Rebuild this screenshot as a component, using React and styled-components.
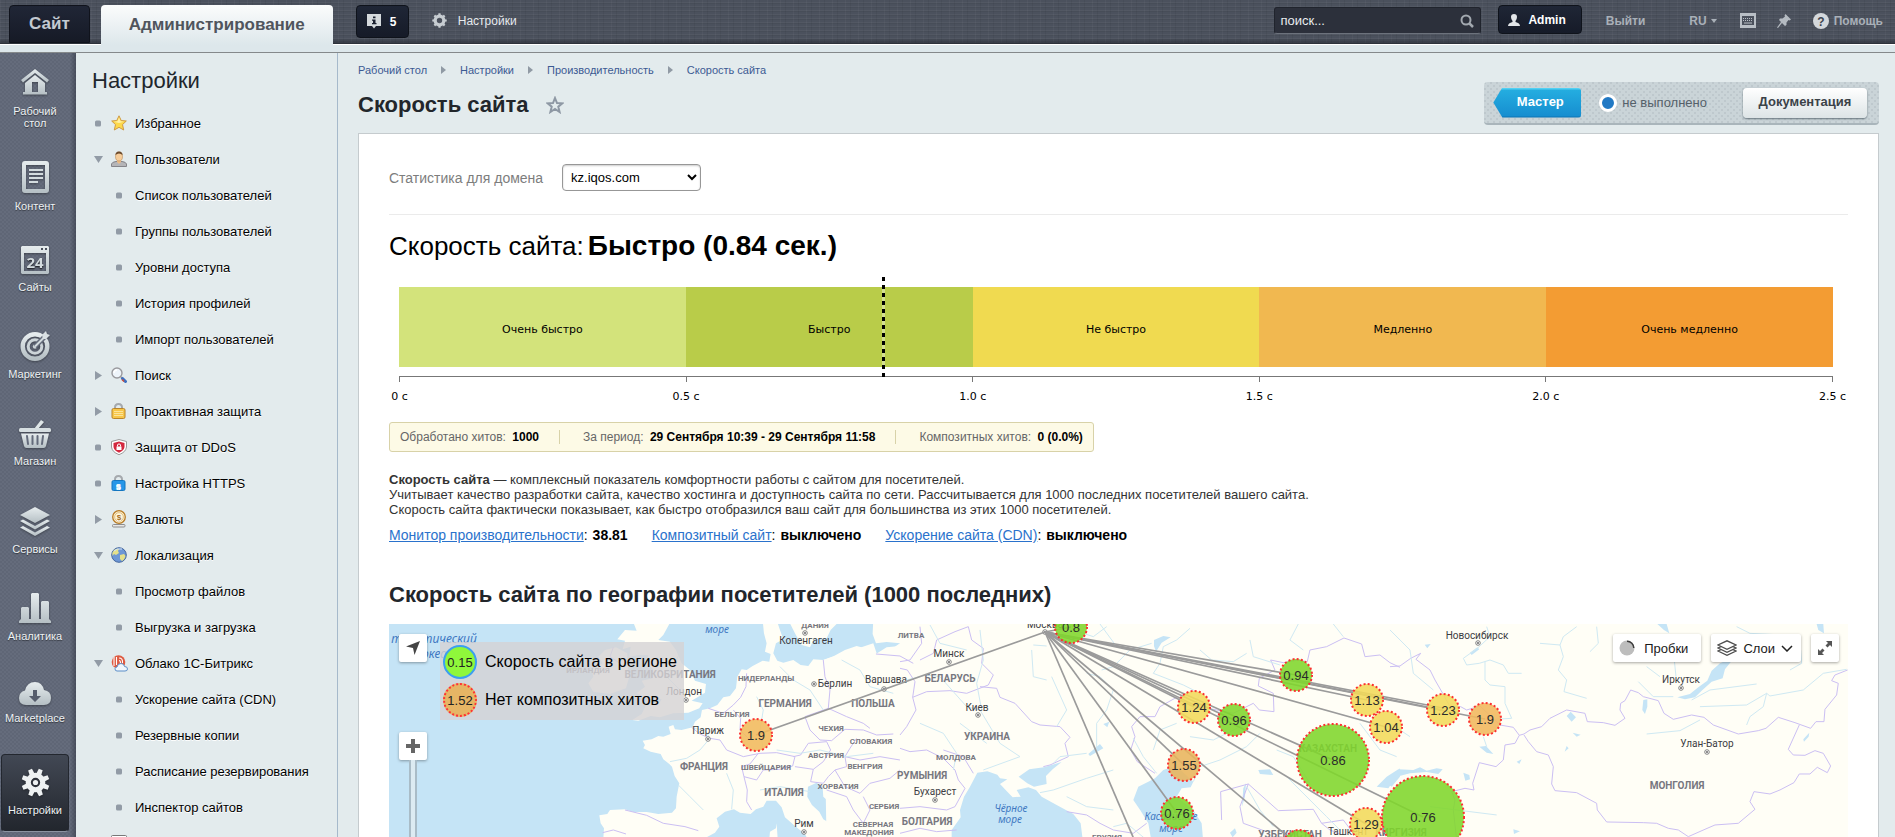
import styled, { createGlobalStyle, css } from 'styled-components';

const GlobalStyle = createGlobalStyle`
    *, *::before {
        box-sizing: border-box;
    }
    body {
        margin: 0;
        background: #e3ebed;
        font-family: "Liberation Sans", Arial, sans-serif;
        font-size: 13px;
        color: #000;
    }
    h1, h2, h3, p, ul, ol {
        margin: 0;
        padding: 0;
        font-weight: normal;
    }
    ul, ol {
        list-style: none;
    }
    a {
        color: inherit;
        text-decoration: none;
    }
    button, input, select {
        font-family: inherit;
    }
`;

const Page = styled.div`
    height: 100vh;
    display: flex;
    flex-direction: column;
    overflow: hidden;
`;

/* ---------- header ---------- */

const Header = styled.header`
    flex: none;
    background: #dde7eb;
    border-bottom: 1px solid #85898b;
    padding-bottom: 8px;
`;

const HeaderBar = styled.div`
    height: 44px;
    display: flex;
    align-items: flex-start;
    justify-content: space-between;
    background:
        linear-gradient(rgba(0,0,0,0) 90%, rgba(20,24,32,0.45)),
        repeating-linear-gradient(90deg, rgba(255,255,255,0.03) 0 1px, transparent 1px 5px, rgba(0,0,0,0.05) 5px 6px, transparent 6px 13px),
        repeating-linear-gradient(0deg, rgba(255,255,255,0.04) 0 1px, transparent 1px 3px, rgba(0,0,0,0.05) 3px 4px),
        #4b515d;
    border-bottom: 1px solid #2d323b;
    box-shadow: 0 1px 0 #fff;
`;

const HeaderSide = styled.div`
    display: flex;
    align-items: flex-start;
    height: 44px;
    padding: 5px 0 0 9px;
`;

const Tab = styled.a`
    height: ${(p) => (p.$active ? '40px' : '38px')};
    padding: ${(p) => (p.$active ? '0 28px' : '0 19px')};
    margin-right: 11px;
    display: flex;
    align-items: center;
    position: relative;
    font-size: 17px;
    font-weight: bold;
    border-radius: 4px 4px 0 0;
    color: ${(p) => (p.$active ? '#50555d' : '#c3cad1')};
    background: ${(p) => (p.$active ? 'linear-gradient(#fbfcfc, #dde7eb)' : 'linear-gradient(#202636, #161a26)')};
    border: ${(p) => (p.$active ? 'none' : '1px solid #10131c')};
`;

const darkButton = css`
    display: flex;
    align-items: center;
    border: 1px solid #0f131b;
    border-radius: 4px;
    background: linear-gradient(#1f2636, #161b28);
    color: #fff;
    font-size: 12px;
    font-weight: bold;
    cursor: pointer;
`;

const CounterButton = styled.button`
    ${darkButton}
    width: 53px;
    height: 33px;
    gap: 9px;
    padding: 0 10px;
    margin-left: 12px;
`;

const UserButton = styled.button`
    ${darkButton}
    height: 29px;
    padding: 0 15px 0 9px;
    gap: 8px;
    margin: 0 24px 0 17px;
`;

const BarLink = styled.a`
    display: flex;
    align-items: center;
    gap: ${(p) => p.$gap || 5}px;
    height: 31px;
    font-size: 12px;
    font-weight: ${(p) => (p.$light ? 'normal' : 'bold')};
    color: ${(p) => (p.$light ? '#e6eaee' : '#a9b0b8')};
    margin-left: ${(p) => p.$space || 0}px;
    &:last-child {
        margin-right: ${(p) => (p.$light ? 0 : 12)}px;
    }
`;

const SearchBox = styled.form`
    display: flex;
    align-items: center;
    width: 207px;
    height: 27px;
    margin-top: 2px;
    padding: 0 6px 0 5px;
    background: #2c303b;
    border: 1px solid #20242d;
    border-bottom-color: #6c727c;
    border-radius: 3px;
    input {
        flex: 1;
        min-width: 0;
        background: none;
        border: none;
        outline: none;
        padding: 0;
        font-size: 13px;
        color: #e8ecef;
    }
    input::placeholder {
        color: #e8ecef;
    }
    button {
        display: flex;
        background: none;
        border: none;
        padding: 0;
    }
`;

/* ---------- left columns ---------- */

const Body = styled.div`
    flex: 1;
    display: flex;
    min-height: 0;
`;

const Rail = styled.nav`
    flex: none;
    width: 76px;
    padding: 0 7px 0 1px;
    background:
        linear-gradient(90deg, transparent 92%, rgba(40,44,56,0.45)),
        radial-gradient(circle at 1px 1px, #5f6676 1px, transparent 1px) 0 0 / 4px 4px,
        radial-gradient(circle at 1px 1px, #5f6676 1px, transparent 1px) 2px 2px / 4px 4px,
        #656c7c;
`;

const RailItem = styled.a`
    display: flex;
    flex-direction: column;
    align-items: center;
    gap: 7px;
    margin-top: ${(p) => p.$space}px;
    padding: 13px 0 15px;
    border: 1px solid transparent;
    border-radius: 4px;
    font-size: 11px;
    line-height: 12px;
    text-align: center;
    color: #eef2f4;
    text-shadow: 0 1px 1px rgba(0,0,0,0.5);
    ${(p) => p.$active && css`
        background: linear-gradient(#424854, #22262d);
        border-color: #23272f;
        border-bottom-color: #8b93a0;
    `}
    svg {
        display: block;
        filter: drop-shadow(0 1px 1px rgba(0,0,0,0.35));
    }
`;

const Menu = styled.nav`
    flex: none;
    width: 262px;
    border-right: 1px solid #a6b9cb;
    padding: 13px 0 0 16px;
    overflow: hidden;
`;

const MenuTitle = styled.h2`
    font-size: 22px;
    line-height: 30px;
    color: #20262c;
    margin-bottom: 9px;
`;

const MenuRow = styled.a`
    display: flex;
    align-items: center;
    height: 36px;
    padding-left: ${(p) => (p.$child ? 21 : 0)}px;
    font-size: 13px;
    white-space: nowrap;
    text-shadow: 0 1px 0 #fff;
`;

const Marker = styled.span`
    width: ${(p) => (p.$child ? 22 : 19)}px;
    padding-left: 2px;
    flex: none;
    svg {
        display: block;
    }
`;

const MenuIcon = styled.span`
    width: 24px;
    flex: none;
    svg {
        display: block;
    }
`;

/* ---------- content ---------- */

const Main = styled.main`
    flex: 1;
    min-width: 0;
    padding: 10px 16px 0 20px;
`;

const Crumbs = styled.ol`
    display: flex;
    font-size: 11px;
    line-height: 14px;
    color: #3c5a93;
    li {
        display: flex;
        align-items: center;
    }
    li + li::before {
        content: '';
        margin: 0 14px;
        border: 4px solid transparent;
        border-left: 5px solid #909aa4;
        border-right: none;
    }
`;

const TitleRow = styled.div`
    display: flex;
    align-items: center;
    justify-content: space-between;
    margin: 5px 0 8px;
`;

const PageTitle = styled.h1`
    display: flex;
    align-items: center;
    gap: 17px;
    padding-top: 2px;
    font-size: 22px;
    font-weight: bold;
    color: #22262b;
`;

const Toolbar = styled.div`
    display: flex;
    align-items: center;
    height: 43px;
    padding: 0 12px 0 9px;
    border-radius: 4px;
    border-bottom: 2px solid #a9b5bb;
    background:
        radial-gradient(circle at 1px 1px, #bec8cd 1px, transparent 1px) 0 0 / 6px 6px,
        radial-gradient(circle at 1px 1px, #bec8cd 1px, transparent 1px) 3px 3px / 6px 6px,
        #cad4d8;
`;

const WizardButton = styled.button`
    height: 30px;
    width: 88px;
    padding: 0 0 2px 6px;
    border: none;
    border-radius: 3px;
    clip-path: polygon(9px 0, 100% 0, 100% 100%, 9px 100%, 0 50%);
    background: linear-gradient(#53d0f2 0 1px, #24ade0 2px, #178ed0 28px, #0c74b4 29px);
    color: #fff;
    font-size: 13px;
    font-weight: bold;
`;

const Status = styled.span`
    display: flex;
    align-items: center;
    gap: 5px;
    margin: 0 36px 0 18px;
    font-size: 13px;
    color: #55606a;
    &::before {
        content: '';
        width: 18px;
        height: 18px;
        border: 3px solid #fff;
        border-radius: 50%;
        background: #2179c4;
    }
`;

const DocButton = styled.button`
    height: 30px;
    width: 124px;
    padding: 0 0 2px;
    border: none;
    border-radius: 4px;
    background: linear-gradient(#fff, #dde4e6);
    box-shadow: 0 1px 2px rgba(60,75,85,0.7);
    color: #3b4248;
    font-size: 13px;
    font-weight: bold;
    white-space: nowrap;
`;

const Card = styled.section`
    background: #fff;
    border: 1px solid #c5cbce;
    padding: 30px 30px 60px;
`;

const DomainRow = styled.div`
    display: flex;
    align-items: center;
    gap: 19px;
    padding-bottom: 23px;
    border-bottom: 1px solid #ebebeb;
    label {
        font-size: 14px;
        color: #7d7d7d;
    }
    select {
        width: 139px;
        height: 27px;
        padding: 0 4px;
        border: 1px solid #979797;
        border-radius: 4px;
        background: #fff;
        box-shadow: inset 0 1px 2px rgba(0,0,0,0.2);
        font-size: 13px;
        color: #000;
    }
`;

const SpeedTitle = styled.h2`
    display: flex;
    align-items: baseline;
    gap: 4px;
    margin-top: 16px;
    font-size: 26px;
    line-height: 30px;
    b {
        font-size: 28px;
    }
`;

const Chart = styled.div`
    position: relative;
    margin: 26px 15px 0 10px;
    font-family: "DejaVu Sans", Verdana, sans-serif;
    font-size: 11px;
`;

const Segments = styled.div`
    display: flex;
    height: 80px;
`;

const Segment = styled.div`
    flex: 1;
    display: flex;
    align-items: center;
    justify-content: center;
    padding-top: 4px;
    background: ${(p) => p.$color};
`;

const Needle = styled.div`
    position: absolute;
    top: -10px;
    height: 100px;
    width: 3px;
    background: repeating-linear-gradient(#000 0 4px, rgba(255,255,255,0.4) 4px 8px);
`;

const Axis = styled.div`
    display: flex;
    justify-content: space-between;
    margin-top: 9px;
    border-top: 1px solid #777;
`;

const Tick = styled.div`
    width: 1px;
    display: flex;
    flex-direction: column;
    align-items: center;
    line-height: 14px;
    white-space: nowrap;
    &::before {
        content: '';
        width: 1px;
        height: 5px;
        margin-bottom: 8px;
        background: #777;
    }
`;

const Hits = styled.ul`
    display: inline-flex;
    align-items: center;
    height: 30px;
    margin-top: 18px;
    padding: 0 10px;
    border: 1px solid #d8d2a8;
    border-radius: 3px;
    background: #fdfae6;
    font-size: 12px;
    color: #666;
    li + li {
        margin-left: 20px;
        padding-left: 23px;
        border-left: 1px solid #d8d2a8;
    }
    b {
        margin-left: 3px;
        color: #000;
    }
`;

const About = styled.p`
    margin-top: 20px;
    font-size: 13px;
    line-height: 15px;
    color: #333;
`;

const Links = styled.ul`
    display: flex;
    gap: 24px;
    margin-top: 9px;
    font-size: 14px;
    line-height: 18px;
    a {
        color: #2a72cc;
        text-decoration: underline;
    }
    b {
        margin-left: 1px;
    }
`;

const SectionTitle = styled.h2`
    margin-top: 38px;
    font-size: 22px;
    line-height: 26px;
    font-weight: bold;
    color: #22262b;
`;

/* ---------- map ---------- */

const MapBox = styled.div`
    position: relative;
    height: 400px;
    margin-top: 16px;
    overflow: hidden;
    background: #fffef6;
    > svg {
        display: block;
        width: 100%;
        height: 100%;
    }
`;

const MapButton = styled.button`
    display: flex;
    align-items: center;
    justify-content: center;
    gap: ${(p) => p.$gap || 0}px;
    min-width: 28px;
    height: 28px;
    padding: ${(p) => (p.$end ? `0 ${p.$end}px 0 6px` : '0')};
    border: none;
    border-radius: 2px;
    background: #fff;
    box-shadow: 0 1px 3px rgba(0,0,0,0.35);
    font-size: 13px;
    color: #1a1a1a;
`;

const LeftControls = styled.div`
    position: absolute;
    top: 10px;
    left: 10px;
    width: 28px;
    display: flex;
    flex-direction: column;
    align-items: center;
`;

const ZoomTrack = styled.div`
    width: 8px;
    height: 160px;
    border: 2px solid #a9bcc7;
    border-top: none;
    background: #dcebf2;
`;

const ZoomGroup = styled.div`
    display: flex;
    flex-direction: column;
    align-items: center;
    margin-top: 70px;
`;

const RightControls = styled.div`
    position: absolute;
    top: 10px;
    right: 9px;
    display: flex;
    gap: 10px;
`;

const Legend = styled.ul`
    position: absolute;
    top: 18px;
    left: 51px;
    width: 244px;
    height: 78px;
    display: flex;
    flex-direction: column;
    justify-content: space-around;
    padding: 1px 3px;
    background: rgba(212,210,212,0.8);
    li {
        display: flex;
        align-items: center;
        gap: 8px;
        font-size: 16px;
        white-space: nowrap;
    }
`;

const LegendDot = styled.span`
    width: 34px;
    height: 34px;
    display: flex;
    align-items: center;
    justify-content: center;
    border: 2px ${(p) => (p.$dotted ? 'dotted #f33' : 'solid #3b9ff0')};
    border-radius: 50%;
    background: ${(p) => p.$color};
    font-size: 13px;
    color: #222;
`;

/* ---------- rail icons ---------- */

const Defs = () => (
    <svg width="0" height="0" style={{ position: 'absolute' }} aria-hidden="true">
        <defs>
            <linearGradient id="steel" x1="0" y1="0" x2="0" y2="1">
                <stop offset="0" stopColor="#e6ecee" />
                <stop offset="1" stopColor="#b5bfc4" />
            </linearGradient>
        </defs>
    </svg>
);

const steel = 'url(#steel)';

const HomeIcon = () => (
    <svg width="30" height="29" viewBox="0 0 30 29" fill={steel}>
        <path d="M15 0 L29 11 L27 13.500 L15 4 L3 13.500 L1 11 Z" />
        <path fillRule="evenodd" d="M15 6 L25 14 V23 H27 V25.500 H3 V23 H5 V14 Z M12 13 V23 H18 V13 Z" />
    </svg>
);

const ContentIcon = () => (
    <svg width="27" height="32" viewBox="0 0 27 32">
        <path fill={steel} fillRule="evenodd" d="M3 0 H24 Q27 0 27 3 V29 Q27 32 24 32 H3 Q0 32 0 29 V3 Q0 0 3 0 Z M4 4 V28 H23 V4 Z" />
        <path stroke="#d3dbde" strokeWidth="2" d="M7 9 H21 M7 13 H21 M7 17 H21 M7 21 H16" />
    </svg>
);

const SitesIcon = () => (
    <svg width="28" height="28" viewBox="0 0 28 28">
        <path fill={steel} fillRule="evenodd" d="M1 0 H27 L28 1 V27 L27 28 H1 L0 27 V1 Z M3 7 V25 H25 V7 Z M20 2 V4 H22 V2 Z M24 2 V4 H26 V2 Z" />
        <text x="14" y="21.500" textAnchor="middle" fontSize="15" fontWeight="bold" fontFamily="Open Sans, sans-serif" fill="#d3dbde">24</text>
    </svg>
);

const TargetIcon = () => (
    <svg width="30" height="30" viewBox="0 0 30 30">
        <circle cx="15" cy="15.500" r="12.300" fill="none" stroke={steel} strokeWidth="4.400" />
        <circle cx="15" cy="15.500" r="6.800" fill="none" stroke="#ccd4d8" strokeWidth="3" />
        <circle cx="15" cy="15.500" r="2.200" fill="#ccd4d8" />
        <path d="M15 15.500 L27 3.500" stroke="#636a7a" strokeWidth="5" />
        <path d="M15 15.500 L24 6.500" stroke="#d3dbde" strokeWidth="2" />
        <path d="M22 4 L26 0 L27 3 L30 4 L26 8 L23 8 Z" fill="#d9e0e3" />
    </svg>
);

const BasketIcon = () => (
    <svg width="32" height="28" viewBox="0 0 32 28">
        <path d="M22 0 L25 2 L19 9 H15 Z" fill="#dfe6e8" />
        <rect y="8" width="32" height="4" rx="1.500" fill="#d6dee1" />
        <path fill={steel} d="M2 13.500 H30 L27 26 Q26.500 28 24.500 28 H7.500 Q5.500 28 5 26 Z" />
        <path stroke="#636a7a" strokeWidth="2" strokeLinecap="round" d="M8 16 L9 24 M13.500 16 V24 M18.500 16 V24 M24 16 L23 24" />
    </svg>
);

const LayersIcon = () => (
    <svg width="32" height="29" viewBox="0 0 32 29" fill={steel}>
        <path d="M16 0 L31 8 L16 16 L1 8 Z" />
        <path d="M1 14 L4 12.500 L16 19 L28 12.500 L31 14 L16 22.500 Z" />
        <path d="M1 20.500 L4 19 L16 25.500 L28 19 L31 20.500 L16 29 Z" />
    </svg>
);

const BarsIcon = () => (
    <svg width="32" height="30" viewBox="0 0 32 30" fill={steel}>
        <path d="M2 15 L3 14 H9 L10 15 V26 H12 V1 L13 0 H19 L20 1 V26 H22 V9 L23 8 H29 L30 9 V26 L32 28 V30 H0 V28 L2 26 Z" />
    </svg>
);

const CloudIcon = () => (
    <svg width="32" height="23" viewBox="0 0 32 23">
        <path fill={steel} d="M7 23 Q0 23 0 16 Q0 10 6 8.500 Q8 0 16 0 Q23 0 25 8 Q32 9 32 16 Q32 23 25 23 Z" />
        <path fill="#565d6c" d="M14 8 H18 V14 H22 L16 20 L10 14 H14 Z" />
    </svg>
);

const gearTeeth = [0, 45, 90, 135, 180, 225, 270, 315];

const Gear = ({ size, color, holes }) => (
    <svg width={size} height={size} viewBox="0 0 28 28">
        {gearTeeth.map((a) => (
            <path key={a} d="M11.500 6 L12 0.500 H16 L16.500 6 Z" fill={color} transform={`rotate(${a + (holes ? 22 : 0)} 14 14)`} />
        ))}
        <circle cx="14" cy="14" r={holes ? 7 : 8} fill="none" stroke={color} strokeWidth={holes ? 5 : 6} />
        {holes && <circle cx="14" cy="14" r="2.500" fill={color} />}
    </svg>
);

const railItems = [
    { label: 'Рабочий стол', icon: <HomeIcon />, space: 2 },
    { label: 'Контент', icon: <ContentIcon />, space: 2 },
    { label: 'Сайты', icon: <SitesIcon />, space: 4 },
    { label: 'Маркетинг', icon: <TargetIcon />, space: 8 },
    { label: 'Магазин', icon: <BasketIcon />, space: 10 },
    { label: 'Сервисы', icon: <LayersIcon />, space: 10 },
    { label: 'Аналитика', icon: <BarsIcon />, space: 8 },
    { label: 'Marketplace', icon: <CloudIcon />, space: 10 },
    { label: 'Настройки', icon: <Gear size={29} color="#eef1f2" holes />, space: 14, active: true },
];

/* ---------- menu icons, 16px ---------- */

const StarIcon = () => (
    <svg width="16" height="16" viewBox="0 0 16 16">
        <path d="M8 0.800 L10.200 5.500 L15.300 6 L11.500 9.600 L12.700 15 L8 12.300 L3.300 15 L4.500 9.600 L0.700 6 L5.800 5.500 Z" fill="#fdd94c" stroke="#cf9a45" />
        <path d="M8 2.500 L9.500 6.300 L13 6.800 L8 8 L3 6.800 L6.500 6.300 Z" fill="#fff1a8" />
    </svg>
);

const UserIcon = () => (
    <svg width="16" height="16" viewBox="0 0 16 16">
        <path d="M0.500 15.500 V13 Q1 11 5 10.500 H11 Q15 11 15.500 13 V15.500 Z" fill="#b5b5b8" stroke="#85858a" />
        <path d="M6 9 H10 V11 L8 13 L6 11 Z" fill="#eebc85" />
        <ellipse cx="8" cy="5.500" rx="3.500" ry="4.500" fill="#f6cd9b" stroke="#b98a58" strokeWidth="0.600" />
        <path d="M4.500 4 Q4.500 0.500 8 0.500 Q11.500 0.500 11.500 4 Q10 2.500 8 2.500 Q6 2.500 4.500 4 Z" fill="#6b4a2c" />
    </svg>
);

const FindIcon = () => (
    <svg width="16" height="16" viewBox="0 0 16 16">
        <path d="M10 10 L12 12" stroke="#999" strokeWidth="2" />
        <path d="M11.500 11.500 L14.500 14.500" stroke="#3d6fc0" strokeWidth="3" strokeLinecap="round" />
        <path d="M11 12.500 L13 14.500" stroke="#d14b36" strokeWidth="1.500" />
        <circle cx="6" cy="6" r="5" fill="#eef4fa" stroke="#9a9a9e" strokeWidth="1.400" />
        <path d="M3 6 Q3 3 6 3" stroke="#fff" strokeWidth="1.500" fill="none" />
    </svg>
);

const LockIcon = ({ color, edge, children }) => (
    <svg width="16" height="16" viewBox="0 0 16 16">
        <path d="M4 7 V4.500 Q4 1 7.500 1 Q11 1 11 4.500 V7" fill="none" stroke="#a5a9ad" strokeWidth="2" />
        <rect x="1" y="5.500" width="13" height="10" rx="1.500" fill={color} stroke={edge} />
        {children}
    </svg>
);

const ShieldIcon = () => (
    <svg width="16" height="16" viewBox="0 0 16 16">
        <path d="M8 0.500 L15.500 2.500 V8 Q15 13 8 15.700 Q1 13 0.500 8 V2.500 Z" fill="#fff" stroke="#9b9b9b" />
        <path d="M8 2.500 L13.500 4 V8 Q13 11.500 8 13.700 Q3 11.500 2.500 8 V4 Z" fill="#d3293f" />
        <path d="M6.500 7.500 V6 Q6.500 5 8 5 Q9.500 5 9.500 6 V7.500" fill="none" stroke="#fff" />
        <rect x="5.500" y="7.500" width="5" height="3.500" fill="#fff" />
    </svg>
);

const CoinIcon = () => (
    <svg width="16" height="18" viewBox="0 0 16 18">
        <rect x="1.500" y="14.500" width="12.500" height="2.500" rx="1" fill="#e8e8e8" stroke="#8d8d8d" />
        <circle cx="8" cy="7" r="6.300" fill="#fbeecb" stroke="#b87b26" strokeWidth="1.300" />
        <circle cx="8" cy="7" r="4.300" fill="#fff8e0" stroke="#d8a95c" strokeWidth="0.700" />
        <text x="8" y="10" textAnchor="middle" fontSize="8" fontWeight="bold" fill="#a66f1c">$</text>
    </svg>
);

const GlobeIcon = () => (
    <svg width="16" height="16" viewBox="0 0 16 16">
        <circle cx="8" cy="8" r="7.300" fill="#6d97d6" stroke="#44669d" />
        <path d="M3 3 Q6 1 8 2 L7 4 L8 6 L5 8 L3 7 L1.500 9 Q1 5 3 3 Z M9 8 L13 7 L14.500 9 Q13.500 13 11 14 L9 12 Z" fill="#e4e08a" />
        <path d="M3 4 Q6 1 11 2" stroke="#d6e5fa" fill="none" />
    </svg>
);

const CloudBitrixIcon = () => (
    <svg width="17" height="17" viewBox="0 0 17 17">
        <circle cx="7.500" cy="7" r="6.800" fill="#de5a41" />
        <path d="M3 2 V11 M5.500 2 V10 M8 3 Q12 3 11.500 8 M8 5.500 Q9.500 5.500 9.500 8" stroke="#fff" strokeWidth="1.100" fill="none" />
        <path d="M6 16 Q4 16 4 13.800 Q4 12 6 12 Q6.500 8.500 10 8.500 Q13 8.500 13.500 11.500 Q16.500 11.500 16.500 14 Q16.500 16 14 16 Z" fill="#f0f6fc" stroke="#5d8fc9" />
    </svg>
);

const SheetIcon = () => (
    <svg width="16" height="16" viewBox="0 0 16 16">
        <rect x="0.500" y="0.500" width="15" height="15" rx="1" fill="#fff" stroke="#777" />
    </svg>
);

const menuItems = [
    { label: 'Избранное', icon: <StarIcon /> },
    { label: 'Пользователи', icon: <UserIcon />, state: 'open', items: ['Список пользователей', 'Группы пользователей', 'Уровни доступа', 'История профилей', 'Импорт пользователей'] },
    { label: 'Поиск', icon: <FindIcon />, state: 'closed' },
    {
        label: 'Проактивная защита',
        state: 'closed',
        icon: (
            <LockIcon color="#f7c649" edge="#b9842b">
                <path d="M3 8.500 H12 M3 10.500 H12 M3 12.500 H12" stroke="#fbe39a" />
            </LockIcon>
        ),
    },
    { label: 'Защита от DDoS', icon: <ShieldIcon /> },
    {
        label: 'Настройка HTTPS',
        icon: (
            <LockIcon color="#2596e8" edge="#1476c0">
                <text x="7.500" y="13.500" textAnchor="middle" fontSize="8" fontWeight="bold" fill="#fff">S</text>
            </LockIcon>
        ),
    },
    { label: 'Валюты', icon: <CoinIcon />, state: 'closed' },
    { label: 'Локализация', icon: <GlobeIcon />, state: 'open', items: ['Просмотр файлов', 'Выгрузка и загрузка'] },
    { label: 'Облако 1С-Битрикс', icon: <CloudBitrixIcon />, state: 'open', items: ['Ускорение сайта (CDN)', 'Резервные копии', 'Расписание резервирования', 'Инспектор сайтов'] },
    { label: '', icon: <SheetIcon /> },
];

const StateMark = ({ state }) => (
    <svg width="9" height="9" viewBox="0 0 9 9" fill="#929ba6">
        {state === 'open' && <path d="M0 1 H9 L4.500 8 Z" />}
        {state === 'closed' && <path d="M1 0 L8 4.500 L1 9 Z" />}
        {!state && <rect x="1" y="1.500" width="6" height="6" rx="1.500" />}
    </svg>
);

/* ---------- map data ---------- */

const hub = { x: 656, y: 8 };

const pins = [
    { x: 367, y: 111, v: '1.9', c: '#f1ba5c' },
    { x: 907, y: 51, v: '0.94', c: '#7fd62b' },
    { x: 978, y: 76, v: '1.13', c: '#f3da5a' },
    { x: 997, y: 103, v: '1.04', c: '#f3da5a' },
    { x: 1054, y: 86, v: '1.23', c: '#f3da5a' },
    { x: 1096, y: 95, v: '1.9', c: '#f1b75c' },
    { x: 805, y: 83, v: '1.24', c: '#f3da5a' },
    { x: 845, y: 96, v: '0.96', c: '#7fd62b' },
    { x: 944, y: 136, v: '0.86', c: '#7fd62b', r: 36 },
    { x: 795, y: 141, v: '1.55', c: '#e8b45c' },
    { x: 788, y: 189, v: '0.76', c: '#7fd62b' },
    { x: 1034, y: 193, v: '0.76', c: '#7fd62b', r: 41 },
    { x: 977, y: 200, v: '1.29', c: '#f3da5a' },
    { x: 910, y: 222, v: '', c: '#7fd62b' },
    { x: 682, y: 3, v: '0.8', c: '#7fd62b' },
];

const countries = [
    [281, 54, 'ВЕЛИКОБРИТАНИЯ', 10], [199, 49, 'ИРЛАНДИЯ', 8], [377, 57, 'НИДЕРЛАНДЫ', 8], [343, 93, 'БЕЛЬГИЯ', 8],
    [396, 83, 'ГЕРМАНИЯ', 10], [484, 83, 'ПОЛЬША', 10], [442, 107, 'ЧЕХИЯ', 8], [482, 120, 'СЛОВАКИЯ', 8],
    [437, 134, 'АВСТРИЯ', 8], [476, 145, 'ВЕНГРИЯ', 8], [315, 146, 'ФРАНЦИЯ', 10], [377, 146, 'ШВЕЙЦАРИЯ', 8],
    [395, 172, 'ИТАЛИЯ', 10], [449, 165, 'ХОРВАТИЯ', 8], [495, 185, 'СЕРБИЯ', 8], [484, 203, 'СЕВЕРНАЯ', 8],
    [480, 211, 'МАКЕДОНИЯ', 8], [426, 4, 'ДАНИЯ', 8], [522, 14, 'ЛИТВА', 8], [561, 58, 'БЕЛАРУСЬ', 10],
    [598, 116, 'УКРАИНА', 10], [567, 136, 'МОЛДОВА', 8], [533, 155, 'РУМЫНИЯ', 10], [538, 201, 'БОЛГАРИЯ', 10],
    [718, 216, 'ГРУЗИЯ', 8], [939, 128, 'КАЗАХСТАН', 10], [901, 214, 'УЗБЕКИСТАН', 10], [1012, 212, 'КИРГИЗИЯ', 10],
    [1288, 165, 'МОНГОЛИЯ', 10],
];

const cities = [
    [295, 71, 'Лондон', 297, 76], [319, 110, 'Париж', 319, 115], [417, 20, 'Копенгаген', 416, 9],
    [446, 63, 'Берлин', 425, 60], [497, 59, 'Варшава', 495, 65], [415, 203, 'Рим', 415, 208],
    [560, 33, 'Минск', 560, 38], [588, 87, 'Киев', 589, 91], [546, 171, 'Бухарест', 546, 176],
    [656, 4, 'Москва', 656, 8], [959, 211, 'Ташкент', 0, -9], [1088, 15, 'Новосибирск', 1089, 19],
    [1292, 59, 'Иркутск', 1292, 64], [1318, 123, 'Улан-Батор', 1318, 128],
];

const seas = [
    [45, 19, 'тлантический', 12], [49, 34, 'океан', 12], [328, 9, 'море', 10], [622, 188, 'Чёрное', 10],
    [621, 199, 'море', 10], [782, 196, 'Каспийское', 10], [782, 208, 'море', 10],
];

const Borders = styled.path`
    fill: none;
    stroke: #cbbff3;
    stroke-width: 1px;
    vector-effect: non-scaling-stroke;
`;

const Rivers = styled.path`
    fill: none;
    stroke: #cfe9f3;
    stroke-width: 1px;
    vector-effect: non-scaling-stroke;
`;

const CountryText = styled.text`
    font-family: Roboto, sans-serif;
    font-weight: 700;
    font-size: ${(p) => p.$size}px;
    fill: #77777f;
    text-anchor: middle;
`;

const CityText = styled.text`
    font: 10px Roboto, sans-serif;
    fill: #3c3c42;
    text-anchor: middle;
`;

const SeaText = styled.text`
    font-family: "Noto Sans", sans-serif;
    font-style: italic;
    font-size: ${(p) => p.$size}px;
    fill: #3f78c2;
    text-anchor: middle;
`;

const PinText = styled.text`
    font: 13px "Liberation Sans", Arial, sans-serif;
    fill: #2b2b2b;
    text-anchor: middle;
`;

const Terrain = () => (
    <>
        {/* western part */}
        <g transform="translate(-9 -14) scale(0.3333)">
            <path fill="#c5e4f6" d="M0 0 H1560 V100 L1495 145 L1480 100 L1330 150 L1340 700 H0 Z" />
            <g fill="#fffef6">
                <path d="M1148 30 L1152 70 L1160 100 L1155 125 L1172 132 L1168 155 L1148 152 L1118 168 L1100 180 L1085 178 L1072 200 L1068 235 L1050 258 L1030 262 L1012 285 L990 295 L966 300 L962 322 L945 335 L938 352 L905 360 L885 358 L880 345 L866 350 L872 372 L850 380 L835 378 L815 388 L788 392 L795 405 L790 415 L812 425 L842 432 L850 448 L868 462 L876 470 L884 498 L898 520 L890 560 L888 595 L876 608 L835 612 L800 606 L760 606 L735 598 L690 600 L682 612 L658 616 L662 640 L672 655 L668 720 L950 720 L965 690 L1005 668 L1018 650 L1010 625 L1035 605 L1062 598 L1080 608 L1112 612 L1128 598 L1150 590 L1160 572 L1188 572 L1205 592 L1215 622 L1245 648 L1275 672 L1300 720 L1395 720 L1372 682 L1352 660 L1350 640 L1330 628 L1318 605 L1296 585 L1282 560 L1284 530 L1310 518 L1328 530 L1330 560 L1352 580 L1385 600 L1412 628 L1425 650 L1430 720 H1620 V100 L1560 108 L1520 112 L1488 132 L1470 128 L1455 115 L1430 108 L1395 120 L1362 138 L1330 150 L1300 148 L1285 168 L1262 165 L1240 150 L1210 158 L1192 152 L1180 130 L1188 100 L1210 88 L1200 60 L1190 30 Z" />
                <path d="M1225 30 L1245 70 L1265 105 L1290 112 L1302 88 L1340 85 L1352 60 L1382 30 Z M1480 30 L1478 72 L1488 100 L1520 96 L1560 100 L1620 100 V30 Z" />
                <path d="M762 42 L770 62 L735 60 L712 88 L735 92 L728 118 L752 110 L748 140 L775 135 L805 135 L800 160 L820 178 L818 205 L785 212 L795 230 L770 250 L800 262 L845 268 L838 280 L800 282 L785 312 L757 330 L775 332 L812 318 L840 322 L880 310 L925 308 L958 295 L968 280 L935 272 L975 248 L978 222 L945 212 L930 180 L905 160 L888 120 L870 95 L835 90 L850 75 L868 42 Z" />
                <path d="M708 112 L675 120 L655 140 L668 160 L635 178 L640 200 L625 220 L640 245 L690 252 L738 235 L748 200 L742 160 L742 130 Z" />
                <path d="M1190 640 L1188 655 L1170 665 L1168 690 L1180 720 L1194 700 Z" />
            </g>
            <Borders d="M935 352 L960 372 L990 385 L1020 390 L1040 420 L1090 440 L1140 430 M1060 300 L1082 325 L1080 360 L1110 390 M985 295 L1030 310 L1060 285 L1082 262 L1098 230 L1100 190 M1135 430 L1110 462 L1085 470 L1092 500 L1130 510 L1150 480 L1200 478 L1238 468 L1245 440 L1190 428 L1140 430 M1092 500 L1102 540 L1100 575 L1115 600 M1245 470 L1300 478 L1330 455 L1352 420 L1340 395 L1285 400 L1262 435 L1240 440 M1330 150 L1335 200 L1350 240 L1345 295 L1400 320 L1450 340 L1470 355 M1345 295 L1275 320 L1290 360 L1320 390 L1355 392 L1395 358 L1450 360 L1490 375 L1540 372 M1300 478 L1292 515 L1330 520 L1345 500 L1365 480 L1400 470 L1395 440 L1410 415 L1430 385 M1365 480 L1395 530 L1440 550 L1470 520 L1530 505 L1560 480 M1340 540 L1400 560 L1420 600 L1450 640 L1470 600 L1450 560 M735 600 L800 616 L850 640 L915 650 L955 662 M668 668 L700 660 L738 672 M700 112 L690 140 L720 160 M1488 132 L1560 138 L1600 160 M1395 440 L1440 450 L1500 440 L1560 450" />
            <Rivers d="M870 455 L920 445 L960 420 L990 385 L975 360 L940 355 M895 525 L930 560 L970 600 M1055 598 L1060 540 L1040 490 M1130 260 L1150 300 L1140 360 L1150 420 M1200 170 L1240 210 L1290 240 L1330 300 M1190 420 L1260 430 L1320 420 L1400 440 L1480 430 M1385 150 L1440 180 L1470 230 L1540 250 M900 130 L860 200 L900 240 M1140 540 L1200 530 L1290 545" />
        </g>

        {/* central part */}
        <g transform="translate(511 -14) scale(0.3333)">
            <g fill="#c5e4f6">
                <path d="M155 720 L155 660 L182 622 L180 600 L192 560 L210 530 L232 488 L262 484 L292 494 L300 505 L322 508 L300 522 L322 545 L338 562 L362 560 L350 540 L385 532 L408 540 L425 560 L470 585 L520 612 L542 640 L552 720 Z" />
                <path d="M356 500 L388 478 L432 472 L485 456 L458 478 L438 498 L440 522 L402 530 L382 520 Z" />
                <path d="M715 530 L745 515 L765 505 L790 480 L815 472 L842 480 L880 515 L872 532 L845 535 L830 560 L880 600 L905 640 L912 720 L770 720 L752 680 L745 640 L722 602 L700 570 Z" />
                <path d="M762 90 L790 78 L812 82 L785 98 L768 125 L762 108 Z M565 432 L600 402 L610 415 L570 438 Z M610 342 L628 335 L622 352 Z M1030 535 L1038 520 L1035 560 L1026 590 Z M1075 480 L1110 478 L1120 495 L1080 492 Z M1462 520 L1500 475 L1500 500 L1475 530 Z M990 668 L1005 655 L1010 668 L998 682 Z" />
            </g>
            <Borders d="M60 50 L65 100 L30 150 L0 155 M60 150 L100 130 L110 90 L165 65 L205 50 L215 90 L250 115 L245 160 L280 195 L265 225 L200 250 L150 242 L80 245 L38 262 L45 215 L22 180 L0 175 M38 262 L48 300 L20 350 L0 375 M240 230 L290 235 L300 262 L345 280 L395 335 L420 345 L480 350 L510 382 L495 400 L505 440 L450 465 L430 470 M0 415 L30 425 L80 420 L130 445 L165 480 L175 510 L195 535 L165 590 L140 600 L60 590 L0 595 M130 420 L190 440 L220 490 M170 660 L110 665 L60 655 L0 670 M500 605 L560 615 L600 640 L640 660 L700 670 L740 640 M765 490 L712 455 L692 420 L705 380 L695 350 L720 320 L765 320 L780 290 L830 262 L860 300 L900 290 L1000 310 L1060 280 L1078 300 L1122 305 L1120 250 L1075 228 L1078 205 L1125 180 L1112 150 L1150 158 L1195 150 L1222 155 L1230 120 L1280 110 L1332 84 L1385 102 L1395 140 L1440 135 L1470 158 L1500 172 M965 630 L962 545 L1045 522 L1135 602 L1240 598 L1265 640 L1330 630 M1045 522 L1020 590 L1030 640 L1100 665 M1330 630 L1360 670 L1400 690 M1265 640 L1290 660 L1320 672" />
            <Rivers d="M90 45 L120 100 L200 120 M20 210 L80 195 L120 200 L200 290 L240 300 L300 400 L360 440 L250 480 M240 60 L250 150 L230 220 L245 300 M60 340 L130 370 L170 430 L160 480 M180 340 L260 400 M395 120 L400 200 L440 210 M400 105 L440 108 M455 200 L500 300 L470 350 M520 60 L580 80 L620 50 M600 42 L650 110 L690 120 L755 100 M590 430 L590 340 L620 300 L640 240 L600 200 L560 190 M870 55 L830 90 L790 110 L780 160 L760 190 L850 225 L900 250 L880 290 M640 480 L560 505 L460 540 L420 548 M560 430 L480 440 L460 460 M700 110 L640 170 L605 180 M900 120 L935 150 L1000 155 L1040 130 M1050 90 L1060 140 L1140 165 M880 515 L900 470 L960 450 L1040 410 L1080 370 M830 340 L780 360 L760 420 M700 385 L730 440 L770 490 M870 380 L940 390 L1060 330 M1130 420 L1180 440 L1230 520 M1380 340 L1440 420 L1490 440 M1040 530 L1080 600 L1120 650 M1160 500 L1200 540 L1280 620 L1320 660 M640 600 L560 590 L500 560 M640 650 L680 640 L740 690 M1300 42 L1330 80 M1195 42 L1170 90 L1210 120" />
        </g>

        {/* eastern part */}
        <g transform="translate(1001 -14) scale(0.3333)">
            <g fill="#c5e4f6">
                <path d="M862 262 L900 252 L925 232 L952 212 L965 182 L990 160 L1035 140 L1005 178 L998 205 L965 215 L935 242 L915 262 L885 268 Z" />
                <path d="M-40 530 L-10 500 L25 478 L70 480 L90 472 L110 482 L140 475 L158 478 L145 492 L110 486 L60 490 L20 500 L-5 535 Z" />
                <path d="M760 270 L772 268 L772 290 L765 312 L757 300 Z M530 318 L542 305 L558 322 L545 335 Z M268 410 L288 408 L310 432 L290 428 Z M220 488 L238 495 L240 508 L226 512 Z M1240 388 L1258 368 L1256 380 L1242 395 Z M548 368 L572 374 L560 380 Z M524 425 L530 408 L536 415 Z M104 104 L122 102 L112 115 Z M380 455 L395 448 L388 462 Z M802 42 L830 42 L838 70 L822 60 Z M370 658 L390 664 L372 672 Z M240 128 L262 112 L268 118 L245 135 Z M1280 42 L1300 42 L1302 70 L1285 60 Z" />
            </g>
            <Borders d="M0 170 L30 168 L62 145 L92 130 L78 148 L120 180 L135 210 L158 250 L180 290 L212 290 L230 300 L270 288 L330 345 L370 352 L388 376 L402 372 L420 360 L455 350 L480 325 L530 300 L585 310 L592 335 L640 338 L675 346 L705 325 L690 300 L692 280 L705 272 L722 240 L745 248 L760 260 L805 272 L822 310 L850 328 L905 315 L942 322 L970 345 L1045 372 L1105 362 L1128 355 L1165 322 L1215 338 L1262 355 L1278 335 L1302 335 L1305 298 L1340 255 L1345 220 L1325 212 L1335 195 L1373 180 M402 375 L415 395 L440 425 L475 435 L490 470 L485 522 L495 542 L560 548 L620 580 L622 600 L650 636 L760 638 L800 640 L835 655 L865 660 L895 680 L945 658 L975 645 L1045 640 L1095 598 L1080 575 L1092 545 L1140 552 L1170 540 L1212 518 L1228 492 L1260 492 L1282 472 L1312 488 L1322 468 L1300 430 L1275 422 L1245 436 L1210 435 L1195 418 L1228 345 M388 376 L375 400 L345 405 L340 450 L318 470 L268 458 L248 520 L252 540 L225 535 L185 545 L195 570 L190 600 L200 690" />
            <Rivers d="M290 50 L300 80 L262 115 L220 145 L230 165 L268 160 L300 150 L340 165 L355 190 L395 190 M285 155 L285 210 L300 225 L345 230 L345 280 L365 325 L280 330 M450 100 L510 105 L520 80 L560 50 M510 105 L520 140 L505 180 L530 210 L522 245 L590 265 M620 50 L625 100 L600 125 M770 372 L870 362 L930 330 M745 215 L790 260 L850 260 M770 170 L810 200 M850 120 L858 200 M905 270 L960 240 L1100 222 M930 290 L1070 285 L1130 250 L1140 258 L1240 240 L1300 190 L1370 178 M1130 250 L1120 290 L1080 320 L1070 345 M0 340 L60 380 M120 590 L200 600 L320 615 M0 60 L60 120 L70 190 L130 240 M280 380 L290 410 M1232 120 L1235 160 L1200 180 M1040 50 L1080 70 L1180 75 M720 90 L760 120" />
        </g>
    </>
);

const MapPicture = () => (
    <svg role="img" aria-label="Скорость сайта по географии посетителей">
        <Terrain />
        {seas.map(([x, y, t, s]) => (
            <SeaText key={t + y} x={x} y={y} $size={s}>{t}</SeaText>
        ))}
        {countries.map(([x, y, t, s]) => (
            <CountryText key={t} x={x} y={y} $size={s}>{t}</CountryText>
        ))}
        {cities.map(([x, y, t, cx, cy]) => (
            <g key={t}>
                <CityText x={x} y={y}>{t}</CityText>
                <circle cx={cx} cy={cy} r="2.300" fill="#fff" stroke="#666" strokeWidth="0.800" />
                <circle cx={cx} cy={cy} r="1" fill="#666" />
            </g>
        ))}
        <g stroke="#9b9b9b" strokeWidth="1.700">
            {pins.map((p) => (
                <line key={p.x} x1={hub.x} y1={hub.y} x2={p.x} y2={p.y} />
            ))}
            <line x1={hub.x} y1={hub.y} x2="790" y2="320" />
            <line x1={hub.x} y1={hub.y} x2="1054" y2="84" />
        </g>
        {pins.map((p) => (
            <g key={p.x}>
                <circle cx={p.x} cy={p.y} r={p.r || 16} fill={p.c} fillOpacity="0.88" stroke="#fb3030" strokeWidth="2" strokeDasharray="2 2.200" />
                <PinText x={p.x} y={p.y + 5}>{p.v}</PinText>
            </g>
        ))}
    </svg>
);

const segments = [
    { label: 'Очень быстро', color: '#d3e37b' },
    { label: 'Быстро', color: '#b9cc49' },
    { label: 'Не быстро', color: '#f0da50' },
    { label: 'Медленно', color: '#f1b850' },
    { label: 'Очень медленно', color: '#f39c33' },
];

const ticks = ['0 с', '0.5 с', '1.0 с', '1.5 с', '2.0 с', '2.5 с'];

const needlePosition = 33.7;

function App() {
    return (
        <Page>
            <GlobalStyle />
            <Defs />
            <Header>
                <HeaderBar>
                    <HeaderSide>
                        <Tab href="#">Сайт</Tab>
                        <Tab href="#" $active>Администрирование</Tab>
                        <CounterButton>
                            <svg width="14" height="15" viewBox="0 0 14 15">
                                <path d="M0 0 H14 V12 H9 L7 14.500 L5 12 H0 Z" fill="#d5dadd" />
                                <path d="M6 2.500 H8.500 V4.200 H6 Z M5 5.500 H8.500 V9 H9.500 V10.200 H5 V9 H6 V6.700 H5 Z" fill="#1b2130" />
                            </svg>
                            5
                        </CounterButton>
                        <BarLink href="#" $light $gap={11} $space={23}>
                            <Gear size={15} color="#c6ccd1" />
                            Настройки
                        </BarLink>
                    </HeaderSide>
                    <HeaderSide>
                        <SearchBox>
                            <input type="text" placeholder="поиск..." aria-label="поиск" />
                            <button type="button" aria-label="Найти">
                                <svg width="14" height="14" viewBox="0 0 14 14" fill="none" stroke="#a2a8af" strokeWidth="2">
                                    <circle cx="6" cy="6" r="4.500" />
                                    <path d="M9.500 9.500 L13 13" strokeWidth="2.500" />
                                </svg>
                            </button>
                        </SearchBox>
                        <UserButton>
                            <svg width="12" height="12" viewBox="0 0 12 12" fill="#e3e6e9">
                                <path d="M6 0 Q9 0 9 3 Q9 5 7.500 7 V8 Q12 9 12 12 H0 Q0 9 4.500 8 V7 Q3 5 3 3 Q3 0 6 0 Z" />
                            </svg>
                            Admin
                        </UserButton>
                        <BarLink href="#">Выйти</BarLink>
                        <BarLink href="#" $gap={4} $space={44}>
                            RU
                            <svg width="6" height="4" viewBox="0 0 6 4" fill="#a9b0b8"><path d="M0 0 H6 L3 4 Z" /></svg>
                        </BarLink>
                        <BarLink href="#" $space={23} aria-label="Клавиатура">
                            <svg width="16" height="15" viewBox="0 0 16 15">
                                <rect width="16" height="15" fill="#b9bfc6" />
                                <rect x="2" y="3" width="12" height="9" fill="#4b515d" />
                                <path d="M3 5.500 H13 M3 7.500 H13" stroke="#b9bfc6" strokeDasharray="1 1" />
                                <path d="M4 10 H12" stroke="#b9bfc6" />
                            </svg>
                        </BarLink>
                        <BarLink href="#" $space={21} aria-label="Закрепить">
                            <svg width="14" height="14" viewBox="0 0 14 14" fill="#b4bac1">
                                <path d="M8.500 0 L14 5.500 L12.500 6.500 L11.500 6 L9.500 8.500 L9.500 11 L8 12 L5 9 L1 14 L0 13.500 L4 8 L2 6 L3 4.500 L5.500 4.500 L8 2.500 L7.500 1.500 Z" />
                            </svg>
                        </BarLink>
                        <BarLink href="#" $space={22}>
                            <svg width="16" height="16" viewBox="0 0 16 16">
                                <circle cx="8" cy="8" r="8" fill="#d4d8dc" />
                                <text x="8" y="12.500" textAnchor="middle" fontSize="12" fontWeight="bold" fill="#3e444f">?</text>
                            </svg>
                            Помощь
                        </BarLink>
                    </HeaderSide>
                </HeaderBar>
            </Header>

            <Body>
                <Rail>
                    {railItems.map((item) => (
                        <RailItem key={item.label} href="#" $space={item.space} $active={item.active}>
                            {item.icon}
                            {item.label}
                        </RailItem>
                    ))}
                </Rail>

                <Menu>
                    <MenuTitle>Настройки</MenuTitle>
                    <ul>
                        {menuItems.map((item) => (
                            <li key={item.label}>
                                <MenuRow href="#">
                                    <Marker><StateMark state={item.state} /></Marker>
                                    <MenuIcon>{item.icon}</MenuIcon>
                                    {item.label}
                                </MenuRow>
                                {item.items && item.items.map((child) => (
                                    <MenuRow key={child} href="#" $child>
                                        <Marker $child><StateMark /></Marker>
                                        {child}
                                    </MenuRow>
                                ))}
                            </li>
                        ))}
                    </ul>
                </Menu>

                <Main>
                    <Crumbs>
                        <li><a href="#">Рабочий стол</a></li>
                        <li><a href="#">Настройки</a></li>
                        <li><a href="#">Производительность</a></li>
                        <li><a href="#">Скорость сайта</a></li>
                    </Crumbs>
                    <TitleRow>
                        <PageTitle>
                            Скорость сайта
                            <svg width="18" height="18" viewBox="0 0 18 18" fill="none" stroke="#8e98a4" strokeWidth="2">
                                <path d="M9 2 L11 7 L16.300 7.300 L12.300 10.700 L13.600 16 L9 13 L4.400 16 L5.700 10.700 L1.700 7.300 L7 7 Z" />
                            </svg>
                        </PageTitle>
                        <Toolbar>
                            <WizardButton>Мастер</WizardButton>
                            <Status>не выполнено</Status>
                            <DocButton>Документация</DocButton>
                        </Toolbar>
                    </TitleRow>

                    <Card>
                        <DomainRow>
                            <label htmlFor="domain">Статистика для домена</label>
                            <select id="domain" defaultValue="kz.iqos.com">
                                <option>kz.iqos.com</option>
                            </select>
                        </DomainRow>
                        <SpeedTitle>
                            <span>Скорость сайта:</span>
                            <b>Быстро (0.84 сек.)</b>
                        </SpeedTitle>
                        <Chart>
                            <Segments>
                                {segments.map((s) => (
                                    <Segment key={s.label} $color={s.color}>{s.label}</Segment>
                                ))}
                            </Segments>
                            <Needle style={{ left: `${needlePosition}%` }} />
                            <Axis>
                                {ticks.map((t) => (
                                    <Tick key={t}>{t}</Tick>
                                ))}
                            </Axis>
                        </Chart>
                        <Hits>
                            <li>Обработано хитов: <b>1000</b></li>
                            <li>За период: <b>29 Сентября 10:39 - 29 Сентября 11:58</b></li>
                            <li>Композитных хитов: <b>0 (0.0%)</b></li>
                        </Hits>
                        <About>
                            <b>Скорость сайта</b> — комплексный показатель комфортности работы с сайтом для посетителей.<br />
                            Учитывает качество разработки сайта, качество хостинга и доступность сайта по сети. Рассчитывается для 1000 последних посетителей вашего сайта.<br />
                            Скорость сайта фактически показывает, как быстро отобразился ваш сайт для большинства из этих 1000 посетителей.
                        </About>
                        <Links>
                            <li><a href="#">Монитор производительности</a>: <b>38.81</b></li>
                            <li><a href="#">Композитный сайт</a>: <b>выключено</b></li>
                            <li><a href="#">Ускорение сайта (CDN)</a>: <b>выключено</b></li>
                        </Links>
                        <SectionTitle>Скорость сайта по географии посетителей (1000 последних)</SectionTitle>
                        <MapBox>
                            <MapPicture />
                            <Legend>
                                <li><LegendDot $color="#8ff73b">0.15</LegendDot>Скорость сайта в регионе</li>
                                <li><LegendDot $color="#e6b565" $dotted>1.52</LegendDot>Нет композитных хитов</li>
                            </Legend>
                            <LeftControls>
                                <MapButton aria-label="Моё местоположение">
                                    <svg width="14" height="14" viewBox="0 0 14 14" fill="#444"><path d="M14 0 L8.500 14 L7 7 L0 5.500 Z" /></svg>
                                </MapButton>
                                <ZoomGroup>
                                    <MapButton aria-label="Приблизить">
                                        <svg width="14" height="14" viewBox="0 0 14 14" fill="#666"><path d="M5 0 H9 V5 H14 V9 H9 V14 H5 V9 H0 V5 H5 Z" /></svg>
                                    </MapButton>
                                    <ZoomTrack />
                                </ZoomGroup>
                            </LeftControls>
                            <RightControls>
                                <MapButton $end={13} $gap={9}>
                                    <svg width="16" height="16" viewBox="0 0 16 16">
                                        <circle cx="8" cy="8" r="7.500" fill="#bdbdbd" />
                                        <path d="M8 1.200 A6.800 6.800 0 0 1 14.800 8" fill="none" stroke="#3c3c3c" strokeWidth="1.500" />
                                    </svg>
                                    Пробки
                                </MapButton>
                                <MapButton $end={8} $gap={6}>
                                    <svg width="20" height="16" viewBox="0 0 20 16" fill="#fff" stroke="#4d4d4d" strokeWidth="1.300">
                                        <path d="M1 11 L10 15.300 L19 11 L10 7 Z" />
                                        <path d="M1 8 L10 12.300 L19 8 L10 4 Z" />
                                        <path d="M1 5 L10 9.300 L19 5 L10 0.800 Z" />
                                    </svg>
                                    Слои
                                    <svg width="12" height="7" viewBox="0 0 12 7" fill="none" stroke="#222" strokeWidth="1.500"><path d="M1 1 L6 6 L11 1" /></svg>
                                </MapButton>
                                <MapButton aria-label="На весь экран">
                                    <svg width="14" height="14" viewBox="0 0 14 14" fill="#555">
                                        <path d="M8 0 H14 V6 L12 4 L9.500 6.500 L7.500 4.500 L10 2 Z M6 14 H0 V8 L2 10 L4.500 7.500 L6.500 9.500 L4 12 Z" />
                                    </svg>
                                </MapButton>
                            </RightControls>
                        </MapBox>
                    </Card>
                </Main>
            </Body>
        </Page>
    );
}

export default App;
